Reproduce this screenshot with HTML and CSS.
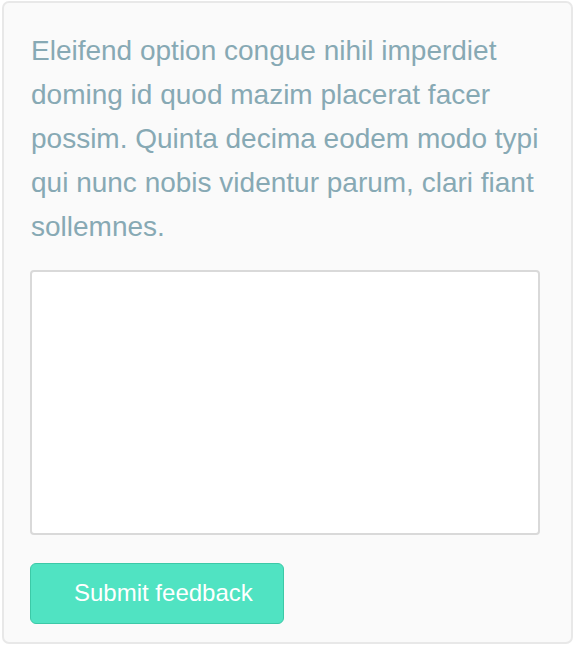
FILE: index.html
```html
<!DOCTYPE html>
<html>
<head>
<meta charset="utf-8">
<link rel="stylesheet" href="styles.css">
</head>
<body>
<div class="card">
  <p class="intro">Eleifend option congue nihil imperdiet doming id quod mazim placerat facer possim. Quinta decima eodem modo typi qui nunc nobis videntur parum, clari fiant sollemnes.</p>
  <textarea class="feedback"></textarea>
  <button class="submit" type="button">Submit feedback</button>
</div>
</body>
</html>
```

FILE: styles.css
```css
html, body {
  margin: 0;
  padding: 0;
  background: #ffffff;
}
body {
  font-family: "Liberation Sans", Arial, Helvetica, sans-serif;
}
.card {
  box-sizing: border-box;
  width: 571px;
  height: 643px;
  margin: 1px 0 0 2px;
  padding: 26px 31px 0 27px;
  background: #fafafa;
  border: 2px solid #e8e8e8;
  border-radius: 7px;
  display: flex;
  flex-direction: column;
  align-items: flex-start;
}
.intro {
  margin: 0;
  font-size: 28px;
  line-height: 44px;
  color: #87a9b4;
}
.feedback {
  box-sizing: border-box;
  display: block;
  width: 510px;
  height: 265px;
  margin: 21px 0 0 -1px;
  padding: 8px;
  border: 2px solid #d9d9d9;
  border-radius: 4px;
  background: #ffffff;
  resize: none;
  font-family: "Liberation Sans", Arial, sans-serif;
}
.submit {
  box-sizing: border-box;
  width: 254px;
  height: 61px;
  margin: 28px 0 0 -1px;
  padding: 0 0 2px 43px;
  text-align: left;
  background: #50e3c2;
  border: 1px solid #3cc9a7;
  border-radius: 6px;
  color: #ffffff;
  font-family: "Liberation Sans", Arial, sans-serif;
  font-size: 24px;
}
```
